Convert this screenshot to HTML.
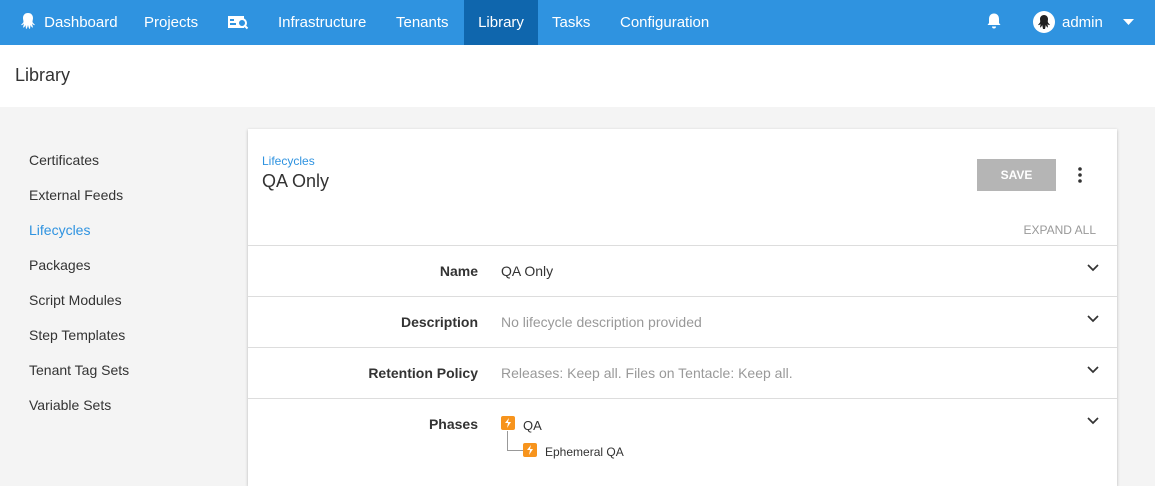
<!DOCTYPE html>
<html><head><meta charset="utf-8"><style>
*{box-sizing:border-box;margin:0;padding:0}
html,body{width:1155px;height:486px;overflow:hidden}
body{font-family:"Liberation Sans",sans-serif;background:#f4f4f4;color:#333;position:relative}
.nav{height:45px;background:#2f93e0;position:relative;color:#fff;font-size:15px}
.nav .it{position:absolute;top:0;height:45px;line-height:45px}
.nav .act{background:#0f66ad}
.hdr{height:62px;background:#fff;padding:0 15px;font-size:18px;line-height:60px;color:#333}
.side{position:absolute;left:29px;top:150px;font-size:14px;color:#333}
.side div{height:35px;line-height:20px}
.card{position:absolute;left:248px;top:129px;width:869px;height:357px;background:#fff;box-shadow:0 1px 3px rgba(0,0,0,.25);overflow:hidden}
.row{position:absolute;left:0;width:869px;border-top:1px solid #ddd;height:51px;font-size:14px}
.row .l{position:absolute;right:639px;top:17px;font-weight:bold;color:#333}
.row .v{position:absolute;left:253px;top:17px}
.chev{position:absolute;right:18px;top:18px}
.ph{display:inline-block;width:14px;height:14px;background:#f7941d;border-radius:2px;position:absolute}
</style></head><body>
<div class="nav">
 <div class="it" style="left:20px"><svg width="16" height="18" viewBox="0 0 16 18" style="vertical-align:-3px"><path d="M8 1C4.5 1 3 3.5 3 6c0 2 .8 3 .3 4.5L1 13c1 .5 2-.5 3-1.5l-1 4c1 .3 2-1 2.5-2.5l.5 4c1 0 1.5-2 2-4 .5 2 1 4 2 4l.5-4c.5 1.5 1.500 2.8 2.5 2.5l-1-4c1 1 2 2 3 1.5l-2.3-2.5C12.2 9 13 8 13 6c0-2.5-1.5-5-5-5z" fill="#fff"/></svg> <span style="margin-left:4px">Dashboard</span></div>
 <div class="it" style="left:144px">Projects</div>
 <div class="it" style="left:227px"><svg width="22" height="16" viewBox="0 0 22 16" style="vertical-align:-3px"><rect x="1" y="2" width="16" height="12" fill="#fff"/><rect x="3" y="5" width="4" height="2" fill="#2f93e0"/><rect x="3" y="9" width="6" height="2" fill="#2f93e0"/><circle cx="15" cy="9" r="4" fill="#2f93e0" stroke="#fff" stroke-width="2"/><path d="M17.5 11.5l3 3" stroke="#fff" stroke-width="2"/></svg></div>
 <div class="it" style="left:278px">Infrastructure</div>
 <div class="it" style="left:396px">Tenants</div>
 <div class="it act" style="left:464px;width:74px;text-align:center">Library</div>
 <div class="it" style="left:552px">Tasks</div>
 <div class="it" style="left:620px">Configuration</div>
 <div class="it" style="left:986px"><svg width="16" height="18" viewBox="0 0 16 18" style="vertical-align:-3px"><path d="M8 1.5c-3 0-5 2.2-5 5.5v4L1.5 13h13L13 11V7c0-3.3-2-5.5-5-5.5zM6 14.5h4a2 2 0 0 1-4 0z" fill="#fff"/></svg></div>
 <div class="it" style="left:1033px"><svg width="22" height="22" viewBox="0 0 22 22" style="vertical-align:-6px"><circle cx="11" cy="11" r="11" fill="#fff"/><path d="M11 4c-2.5 0-4 2-4 4 0 1.5.5 2 0 3.5L5 14c1 .3 2-.5 2.5-1l-.5 3.5c1 0 1.8-1.5 2.2-2.5L10 18h2l.8-4c.4 1 1.2 2.5 2.2 2.5l-.5-3.5c.5.5 1.5 1.3 2.5 1l-2-2.5c-.5-1.5 0-2 0-3.5 0-2-1.5-4-4-4z" fill="#222"/></svg><span style="margin-left:7px">admin</span></div>
 <div class="it" style="left:1123px"><svg width="11" height="6" viewBox="0 0 11 6" style="vertical-align:2px"><path d="M0 0h11L5.5 6z" fill="#fff"/></svg></div>
</div>
<div class="hdr">Library</div>
<div class="side">
 <div>Certificates</div><div>External Feeds</div><div style="color:#2f93e0">Lifecycles</div><div>Packages</div><div>Script Modules</div><div>Step Templates</div><div>Tenant Tag Sets</div><div>Variable Sets</div>
</div>
<div class="card">
 <div style="position:absolute;left:14px;top:25px;font-size:12px;color:#2f93e0">Lifecycles</div>
 <div style="position:absolute;left:14px;top:42px;font-size:18px;color:#333">QA Only</div>
 <div style="position:absolute;left:729px;top:30px;width:79px;height:32px;background:#b5b5b5;color:#fff;font-size:12px;font-weight:bold;text-align:center;line-height:32px">SAVE</div>
 <svg style="position:absolute;left:830px;top:38px" width="4" height="16"><circle cx="2" cy="2" r="1.8" fill="#333"/><circle cx="2" cy="8" r="1.8" fill="#333"/><circle cx="2" cy="14" r="1.8" fill="#333"/></svg>
 <div style="position:absolute;right:21px;top:94px;font-size:12px;color:#999">EXPAND ALL</div>
 <div class="row" style="top:116px"><span class="l">Name</span><span class="v">QA Only</span><svg class="chev" width="12" height="8"><path d="M1 1l5 5 5-5" fill="none" stroke="#333" stroke-width="1.7"/></svg></div>
 <div class="row" style="top:167px"><span class="l">Description</span><span class="v" style="color:#999">No lifecycle description provided</span><svg class="chev" width="12" height="8"><path d="M1 1l5 5 5-5" fill="none" stroke="#333" stroke-width="1.7"/></svg></div>
 <div class="row" style="top:218px"><span class="l">Retention Policy</span><span class="v" style="color:#999">Releases: Keep all. Files on Tentacle: Keep all.</span><svg class="chev" width="12" height="8"><path d="M1 1l5 5 5-5" fill="none" stroke="#333" stroke-width="1.7"/></svg></div>
 <div class="row" style="top:269px;height:88px"><span class="l">Phases</span><svg class="chev" width="12" height="8"><path d="M1 1l5 5 5-5" fill="none" stroke="#333" stroke-width="1.7"/></svg>
  <span class="ph" style="left:253px;top:17px"></span>
  <svg style="position:absolute;left:256px;top:19px" width="8" height="10"><path d="M5 0L1 5h3l-1 5 4-6H4z" fill="#fff"/></svg>
  <span style="position:absolute;left:275px;top:19px;font-size:13px;color:#333">QA</span>
  <div style="position:absolute;left:259px;top:32px;width:16px;height:20px;border-left:1px solid #999;border-bottom:1px solid #999"></div>
  <span class="ph" style="left:275px;top:44px"></span>
  <svg style="position:absolute;left:278px;top:46px" width="8" height="10"><path d="M5 0L1 5h3l-1 5 4-6H4z" fill="#fff"/></svg>
  <span style="position:absolute;left:297px;top:46px;font-size:12px;color:#333">Ephemeral QA</span>
 </div>
</div>
</body></html>
